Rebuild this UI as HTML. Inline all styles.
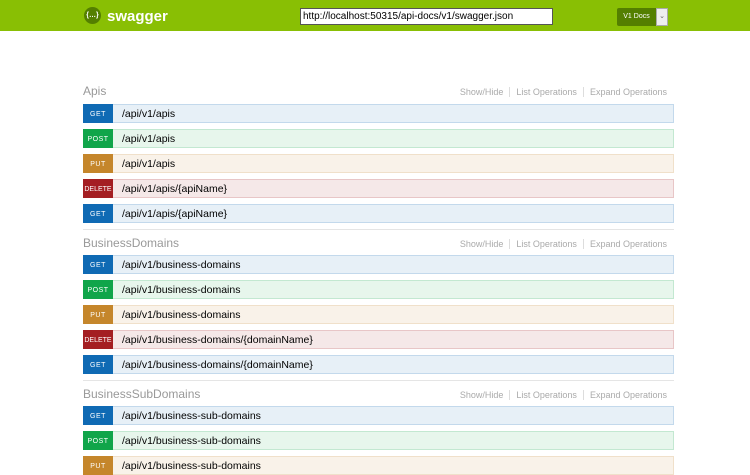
<!DOCTYPE html>
<html><head><style>
body{margin:0;width:750px;height:457px;overflow:hidden;background:#fff;font-family:"Liberation Sans",Arial,sans-serif;}
.hdr{position:absolute;left:0;top:0;width:750px;height:31px;background:#89bf04;}
.logo{position:absolute;left:84px;top:7px;width:17px;height:17px;border-radius:50%;background:#547f00;color:#fff;font-size:7px;line-height:17px;text-align:center;font-weight:bold}
.brand{position:absolute;left:107px;top:8px;color:#fff;font-weight:bold;font-size:15px}
.url{position:absolute;left:300px;top:8px;width:249px;height:15px;border:1px solid #555;background:#fff;font-size:10px;line-height:15px;padding-left:2px;box-sizing:content-box;color:#000}
.btn{position:absolute;left:617px;top:8px;width:39px;height:18px;background:#547f00;color:#fff;font-size:7px;line-height:18px;text-align:center;border-radius:2px 0 0 2px}
.sel{position:absolute;left:656px;top:8px;width:10px;height:16px;background:#eee;border:1px solid #aaa;color:#666;font-size:7px;text-align:center;line-height:16px}
.title{position:absolute;left:83px;font-size:12px;color:#999;}
.links{position:absolute;right:77px;font-size:9px;color:#aaa}
.links span{padding:0 6px;border-left:1px solid #ddd}
.links span:first-child{border:none}
.row{position:absolute;left:83px;width:589px;height:17px;border:1px solid;box-sizing:content-box}
.b{position:absolute;left:-1px;top:-1px;width:30px;height:19px;color:#fff;font-size:7px;display:flex;align-items:center;justify-content:center;padding-top:1px;box-sizing:border-box;letter-spacing:.5px}
.p{position:absolute;left:38px;top:1px;font-size:10.5px;line-height:17px;color:#000}
.get{background:#e7f0f7;border-color:#c3d9ec}.get .b{background:#0f6ab4}
.post{background:#e7f6ec;border-color:#c3e8d1}.post .b{background:#10a54a}
.put{background:#f9f2e9;border-color:#f0e0ca}.put .b{background:#c5862b}
.del{background:#f5e8e8;border-color:#e8c6c7}.del .b{background:#a41e22;letter-spacing:0}
.sep{position:absolute;left:83px;width:591px;height:1px;background:#e5e5e5}
</style></head><body>
<div class="hdr"><div class="logo">{…}</div><div class="brand">swagger</div>
<div class="url">http://localhost:50315/api-docs/v1/swagger.json</div>
<div class="btn">V1 Docs</div><div class="sel">⌄</div></div>

<div class="title" style="top:84px">Apis</div>
<div class="links" style="top:87px"><span>Show/Hide</span><span>List Operations</span><span>Expand Operations</span></div>
<div class="row get" style="top:104px"><div class="b">GET</div><div class="p">/api/v1/apis</div></div>
<div class="row post" style="top:129px"><div class="b">POST</div><div class="p">/api/v1/apis</div></div>
<div class="row put" style="top:154px"><div class="b">PUT</div><div class="p">/api/v1/apis</div></div>
<div class="row del" style="top:179px"><div class="b">DELETE</div><div class="p">/api/v1/apis/{apiName}</div></div>
<div class="row get" style="top:204px"><div class="b">GET</div><div class="p">/api/v1/apis/{apiName}</div></div>
<div class="sep" style="top:229px"></div>

<div class="title" style="top:236px">BusinessDomains</div>
<div class="links" style="top:239px"><span>Show/Hide</span><span>List Operations</span><span>Expand Operations</span></div>
<div class="row get" style="top:255px"><div class="b">GET</div><div class="p">/api/v1/business-domains</div></div>
<div class="row post" style="top:280px"><div class="b">POST</div><div class="p">/api/v1/business-domains</div></div>
<div class="row put" style="top:305px"><div class="b">PUT</div><div class="p">/api/v1/business-domains</div></div>
<div class="row del" style="top:330px"><div class="b">DELETE</div><div class="p">/api/v1/business-domains/{domainName}</div></div>
<div class="row get" style="top:355px"><div class="b">GET</div><div class="p">/api/v1/business-domains/{domainName}</div></div>
<div class="sep" style="top:380px"></div>

<div class="title" style="top:387px">BusinessSubDomains</div>
<div class="links" style="top:390px"><span>Show/Hide</span><span>List Operations</span><span>Expand Operations</span></div>
<div class="row get" style="top:406px"><div class="b">GET</div><div class="p">/api/v1/business-sub-domains</div></div>
<div class="row post" style="top:431px"><div class="b">POST</div><div class="p">/api/v1/business-sub-domains</div></div>
<div class="row put" style="top:456px"><div class="b">PUT</div><div class="p">/api/v1/business-sub-domains</div></div>
</body></html>
